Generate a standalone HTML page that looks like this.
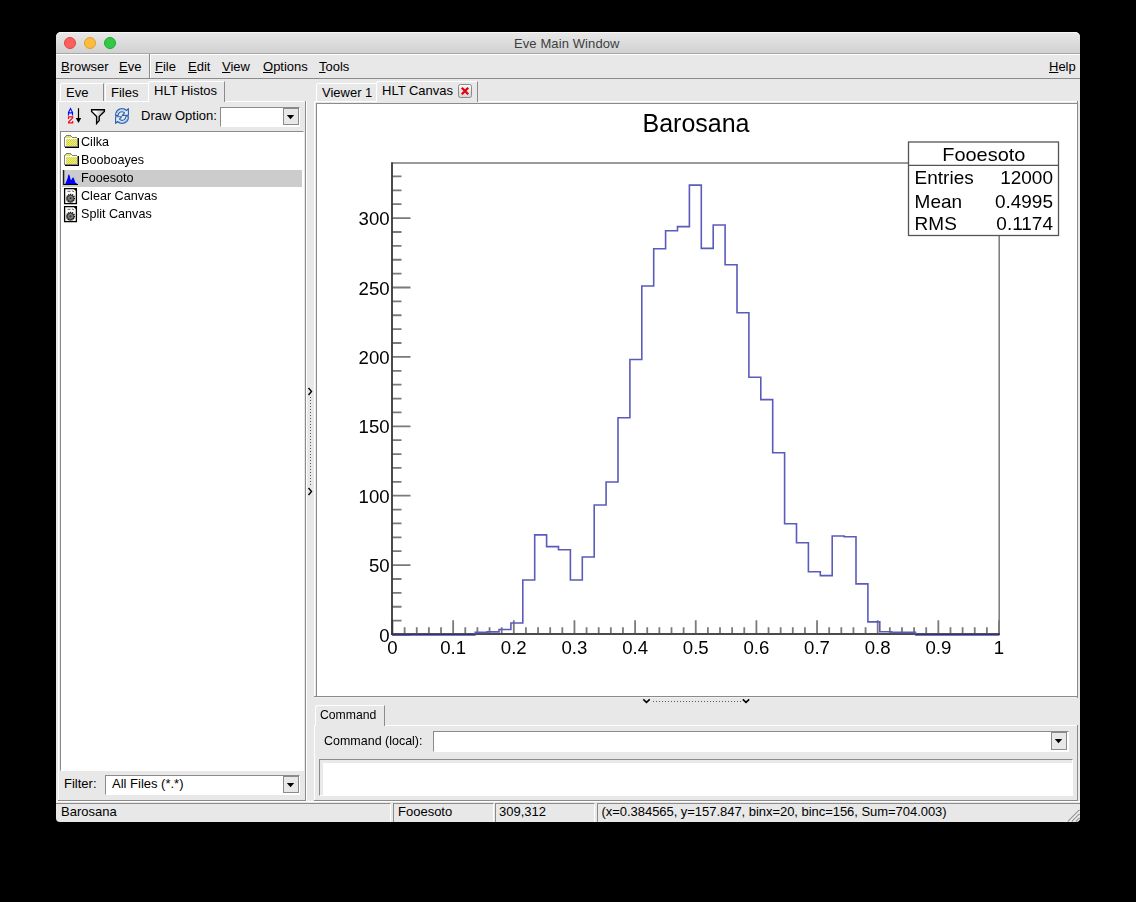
<!DOCTYPE html>
<html><head><meta charset="utf-8"><title>Eve Main Window</title>
<style>
html,body{margin:0;padding:0;background:#000;width:1136px;height:902px;overflow:hidden}
body{position:relative;font-family:"Liberation Sans",sans-serif;font-size:12.5px;color:#000}
.a{position:absolute;box-sizing:border-box}
.t{position:absolute;white-space:pre;line-height:12px;font-size:13px}
#win{left:56px;top:32px;width:1024px;height:790px;background:#e8e8e8;border-radius:5px 5px 4px 4px;overflow:hidden}
#title{left:56px;top:32px;width:1024px;height:22px;background:linear-gradient(#e7e7e7,#d1d1d1);border-top:1px solid #f6f6f6;border-bottom:1px solid #a8a8a8;border-radius:5px 5px 0 0}
.tl{position:absolute;top:37px;width:12px;height:12px;border-radius:50%;box-sizing:border-box}
.hl{background:#fff}
.sh{background:#8b8b8b}
.li{font-size:12.6px;will-change:transform}
.u{text-decoration:underline;text-underline-offset:1px}
</style></head><body>
<div class="a" id="win"></div>
<div class="a" id="title"></div>
<div class="tl" style="left:64px;background:#fc605c;border:1px solid #e0443e"></div>
<div class="tl" style="left:84px;background:#fdbc40;border:1px solid #dea123"></div>
<div class="tl" style="left:104px;background:#34c84a;border:1px solid #1aab29"></div>
<div class="t" style="left:514px;top:38px;font-size:13px;color:#3e3e3e;letter-spacing:0.1px">Eve Main Window</div>

<!-- menubars -->
<div class="a hl" style="left:56px;top:54px;width:1024px;height:1px"></div>
<div class="a sh" style="left:56px;top:78px;width:1024px;height:1px"></div>
<div class="a sh" style="left:149px;top:54px;width:1px;height:25px"></div>
<div class="a hl" style="left:150px;top:54px;width:1px;height:24px"></div>
<div class="t" style="left:61px;top:61px"><span class="u">B</span>rowser</div>
<div class="t" style="left:119px;top:61px"><span class="u">E</span>ve</div>
<div class="t" style="left:155px;top:61px"><span class="u">F</span>ile</div>
<div class="t" style="left:188px;top:61px"><span class="u">E</span>dit</div>
<div class="t" style="left:222px;top:61px"><span class="u">V</span>iew</div>
<div class="t" style="left:263px;top:61px"><span class="u">O</span>ptions</div>
<div class="t" style="left:319px;top:61px"><span class="u">T</span>ools</div>
<div class="t" style="left:1049px;top:61px"><span class="u">H</span>elp</div>

<!-- left tabs -->
<div class="a" style="left:60px;top:83px;width:44px;height:18px;border-left:1px solid #fff;border-top:1px solid #fff;border-right:1px solid #8b8b8b;border-radius:3px 0 0 0"></div>
<div class="t" style="left:66px;top:87px">Eve</div>
<div class="a" style="left:105px;top:83px;width:44px;height:18px;border-left:1px solid #fff;border-top:1px solid #fff;border-right:1px solid #fff;border-radius:3px 0 0 0"></div>
<div class="t" style="left:111px;top:87px">Files</div>
<div class="a" style="left:148px;top:81px;width:77px;height:21px;background:#e8e8e8;border-left:1px solid #fff;border-top:1px solid #fff;border-right:1px solid #8b8b8b;border-radius:3px 0 0 0"></div>
<div class="t" style="left:154px;top:85px">HLT Histos</div>

<!-- left panel frame -->
<div class="a hl" style="left:58px;top:101px;width:90px;height:1px"></div>
<div class="a hl" style="left:225px;top:101px;width:80px;height:1px"></div>
<div class="a hl" style="left:58px;top:101px;width:1px;height:699px"></div>
<div class="a sh" style="left:305px;top:101px;width:1px;height:700px"></div>
<div class="a sh" style="left:58px;top:800px;width:248px;height:1px"></div>

<!-- toolbar -->
<svg class="a" style="left:64px;top:105px" width="20" height="22" viewBox="0 0 20 22">
 <g fill="none" stroke-width="1.15" stroke-linecap="square">
  <path d="M4.5,10 V7.5 L5.5,5.5 L6.5,3.5 L7.5,5.5 L8.5,7.5 V10 M4.5,7.9 H8.5" stroke="#0010ff"/>
  <path d="M4.5,13.3 V11.9 H8.7 V12.8 L4.6,17 V17.8 H8.7 V16.5" stroke="#ff0010"/>
 </g>
 <path d="M14.5,3.2 V14" stroke="#000" stroke-width="1.2"/>
 <path d="M11.8,13 H17.2 L14.5,17.9 Z" fill="#000"/>
</svg>
<svg class="a" style="left:89px;top:107px" width="18" height="19" viewBox="0 0 18 19">
 <defs><linearGradient id="fg" x1="0" y1="0" x2="1" y2="0.3"><stop offset="0.3" stop-color="#fff"/><stop offset="1" stop-color="#a8a8a8"/></linearGradient></defs>
 <path d="M2.6,2.7 H15.4 V4.5 L10.2,9.5 V13.6 L7.6,16.5 V9.5 L2.6,4.5 Z" fill="url(#fg)" stroke="#000" stroke-width="1.35" stroke-linejoin="miter"/>
</svg>
<svg class="a" style="left:114px;top:107px" width="16" height="18" viewBox="0 0 16 18">
 <g fill="#e6eff9" stroke="#2e64ad" stroke-width="1.15" stroke-linejoin="round">
  <path d="M1.5,8.3 C1.5,4.5 4.3,1.6 8,1.6 C10,1.6 11.5,2.4 12.6,3.5 L14.4,1.6 V8.3 H8.2 L10.6,5.9 C9.9,5.2 9,4.7 8,4.7 C6,4.7 4.4,6.2 4.2,8.3 Z"/>
  <path d="M14.5,9.7 C14.5,13.5 11.7,16.4 8,16.4 C6,16.4 4.5,15.6 3.4,14.5 L1.6,16.4 V9.7 H7.8 L5.4,12.1 C6.1,12.8 7,13.3 8,13.3 C10,13.3 11.6,11.8 11.8,9.7 Z"/>
 </g>
 <path d="M3,6.5 C3.8,4.2 5.8,2.9 8,2.9 C9.5,2.9 10.8,3.4 11.8,4.5" stroke="#9ec0e6" stroke-width="0.9" fill="none"/>
 <path d="M13,11.5 C12.2,13.8 10.2,15.1 8,15.1 C6.5,15.1 5.2,14.6 4.2,13.5" stroke="#9ec0e6" stroke-width="0.9" fill="none"/>
</svg>
<div class="t" style="left:141px;top:110px">Draw Option:</div>
<div class="a" style="left:220px;top:107px;width:80px;height:20px;background:#fff;border-left:1px solid #8b8b8b;border-top:1px solid #8b8b8b;border-right:1px solid #fff;border-bottom:1px solid #fff"></div>
<div class="a" style="left:283px;top:108px;width:16px;height:17px;background:#e8e8e8;border:1px solid #8b8b8b"></div>
<svg class="a" style="left:286px;top:114px" width="9" height="6"><path d="M0.8,1 H8.2 L4.5,5.2 Z" fill="#000"/></svg>

<!-- list box -->
<div class="a" style="left:60px;top:131px;width:244px;height:640px;background:#fff;border-left:1px solid #8b8b8b;border-top:1px solid #8b8b8b;border-right:1px solid #fff;border-bottom:1px solid #fff"></div>
<div class="a" style="left:62px;top:170px;width:240px;height:17px;background:#cccccc"></div>
<!-- folder icons -->
<svg width="0" height="0" style="position:absolute"><defs><pattern id="dith" width="2" height="2" patternUnits="userSpaceOnUse"><rect width="2" height="2" fill="#ffff00"/><rect x="1" width="1" height="1" fill="#c4c4c4"/><rect y="1" width="1" height="1" fill="#c4c4c4"/></pattern></defs></svg>
<svg class="a" style="left:63px;top:134px" width="17" height="15" viewBox="0 0 17 15" shape-rendering="crispEdges">
 <rect x="2" y="2" width="6" height="2" fill="url(#dith)"/>
 <rect x="2" y="4" width="12" height="8" fill="url(#dith)"/>
 <rect x="2" y="4" width="12" height="1" fill="#fff"/>
 <rect x="2" y="4" width="1" height="8" fill="#fff"/>
 <path d="M1,3 H2 V2 H3 V1 H8 V2 H9 V3 H14 V4 H9 V3 H8 V2 H3 V3 H2 V12 H14 V4 H15 V13 H1 Z" fill="#808080"/>
 <rect x="2" y="13" width="14" height="1" fill="#000"/>
 <rect x="15" y="4" width="1" height="10" fill="#000"/>
</svg>
<svg class="a" style="left:63px;top:152px" width="17" height="15" viewBox="0 0 17 15" shape-rendering="crispEdges">
 <rect x="2" y="2" width="6" height="2" fill="url(#dith)"/>
 <rect x="2" y="4" width="12" height="8" fill="url(#dith)"/>
 <rect x="2" y="4" width="12" height="1" fill="#fff"/>
 <rect x="2" y="4" width="1" height="8" fill="#fff"/>
 <path d="M1,3 H2 V2 H3 V1 H8 V2 H9 V3 H14 V4 H9 V3 H8 V2 H3 V3 H2 V12 H14 V4 H15 V13 H1 Z" fill="#808080"/>
 <rect x="2" y="13" width="14" height="1" fill="#000"/>
 <rect x="15" y="4" width="1" height="10" fill="#000"/>
</svg>
<!-- histo icon -->
<svg class="a" style="left:63px;top:170px" width="17" height="16" viewBox="0 0 17 16">
 <path d="M0.7,0 V14.5 H15" stroke="#000" stroke-width="1.1" fill="none"/>
 <path d="M2.2,14 L4.5,8.5 L5.3,5 L6,4.3 L6.8,6 L7.5,9.5 L8.3,10 L9.5,7.8 L10.5,7.5 L11.3,9.5 L12.3,12.5 L14.5,14 Z" fill="#0000ff"/>
</svg>
<!-- macro icons -->
<svg class="a" style="left:63px;top:188px" width="15" height="17" viewBox="0 0 15 17">
 <rect x="1.6" y="0.6" width="11.8" height="15" fill="#fff" stroke="#000" stroke-width="1.3"/>
 <path d="M10.2,0.4 H13.6 V3.8 Z" fill="#000"/>
 <path d="M4.5,3.3 H7.5 M8.8,2.8 L11,3.8" stroke="#555" stroke-width="0.9"/>
 <circle cx="7.5" cy="10.3" r="3.9" fill="#858178" stroke="#111" stroke-width="1.4" stroke-dasharray="1.1 0.85"/>
 <circle cx="7.5" cy="10.3" r="3.1" fill="none" stroke="#222" stroke-width="0.7"/>
 <circle cx="7.5" cy="10.3" r="1.0" fill="#2a2a2a"/>
</svg>
<svg class="a" style="left:63px;top:206px" width="15" height="17" viewBox="0 0 15 17">
 <rect x="1.6" y="0.6" width="11.8" height="15" fill="#fff" stroke="#000" stroke-width="1.3"/>
 <path d="M10.2,0.4 H13.6 V3.8 Z" fill="#000"/>
 <path d="M4.5,3.3 H7.5 M8.8,2.8 L11,3.8" stroke="#555" stroke-width="0.9"/>
 <circle cx="7.5" cy="10.3" r="3.9" fill="#858178" stroke="#111" stroke-width="1.4" stroke-dasharray="1.1 0.85"/>
 <circle cx="7.5" cy="10.3" r="3.1" fill="none" stroke="#222" stroke-width="0.7"/>
 <circle cx="7.5" cy="10.3" r="1.0" fill="#2a2a2a"/>
</svg>
<div class="t li" style="left:81px;top:136px">Cilka</div>
<div class="t li" style="left:81px;top:154px">Booboayes</div>
<div class="t li" style="left:81px;top:172px">Fooesoto</div>
<div class="t li" style="left:81px;top:190px">Clear Canvas</div>
<div class="t li" style="left:81px;top:208px">Split Canvas</div>

<!-- filter -->
<div class="t" style="left:64px;top:778px">Filter:</div>
<div class="a" style="left:105px;top:775px;width:195px;height:20px;background:#fff;border-left:1px solid #8b8b8b;border-top:1px solid #8b8b8b;border-right:1px solid #fff;border-bottom:1px solid #fff"></div>
<div class="t" style="left:112px;top:778px">All Files (*.*)</div>
<div class="a" style="left:283px;top:776px;width:16px;height:17px;background:#e8e8e8;border:1px solid #8b8b8b"></div>
<svg class="a" style="left:286px;top:782px" width="9" height="6"><path d="M0.8,1 H8.2 L4.5,5.2 Z" fill="#000"/></svg>

<!-- vertical splitter -->
<div class="a hl" style="left:306px;top:101px;width:1px;height:700px"></div>
<svg class="a" style="left:306px;top:380px" width="10" height="120">
 <path d="M2.5,8 L5.5,11.5 L2.5,15" stroke="#000" stroke-width="1.4" fill="none"/>
 <path d="M2.5,108 L5.5,111.5 L2.5,115" stroke="#000" stroke-width="1.4" fill="none"/>
 <line x1="4.5" y1="17" x2="4.5" y2="106" stroke="#555" stroke-width="1" stroke-dasharray="1 2"/>
</svg>

<!-- right tabs -->
<div class="a" style="left:316px;top:83px;width:61px;height:18px;border-left:1px solid #fff;border-top:1px solid #fff;border-right:1px solid #fff;border-radius:3px 0 0 0"></div>
<div class="t" style="left:322px;top:87px">Viewer 1</div>
<div class="a" style="left:376px;top:81px;width:102px;height:21px;background:#e8e8e8;border-left:1px solid #fff;border-top:1px solid #fff;border-right:1px solid #8b8b8b;border-radius:3px 0 0 0"></div>
<div class="t" style="left:382px;top:85px">HLT Canvas</div>
<svg class="a" style="left:458px;top:84px" width="14" height="14" viewBox="0 0 14 14">
 <defs><linearGradient id="cg" x1="0" y1="0" x2="0" y2="1"><stop offset="0" stop-color="#fafafa"/><stop offset="1" stop-color="#d4d4d4"/></linearGradient></defs>
 <rect x="0.5" y="0.5" width="13" height="13" rx="2" fill="url(#cg)" stroke="#8a8a8a"/>
 <path d="M3.8,3.8 L10.2,10.2 M10.2,3.8 L3.8,10.2" stroke="#e3000f" stroke-width="2.3"/>
</svg>

<!-- right frame -->
<div class="a hl" style="left:314px;top:101px;width:62px;height:1px"></div>
<div class="a hl" style="left:478px;top:101px;width:600px;height:1px"></div>
<div class="a hl" style="left:314px;top:101px;width:1px;height:597px"></div>
<div class="a sh" style="left:1077px;top:101px;width:1px;height:597px"></div>
<!-- canvas -->
<div class="a" style="left:316px;top:103px;width:761px;height:594px;background:#fff;border-left:1px solid #8b8b8b;border-top:1px solid #8b8b8b;border-bottom:1px solid #8b8b8b"></div>

<!--PLOT-->
<svg class="a" style="left:317px;top:104px;will-change:transform" width="759" height="592" viewBox="317 104 759 592">
<path d="M392.50,163.0 H999.2 V634" stroke="#7a7a7a" stroke-width="1.5" fill="none"/>
<path d="M392.50,634.00 V620.30 M404.63,634.00 V627.20 M416.76,634.00 V627.20 M428.89,634.00 V627.20 M441.02,634.00 V627.20 M453.15,634.00 V620.30 M465.28,634.00 V627.20 M477.41,634.00 V627.20 M489.54,634.00 V627.20 M501.67,634.00 V627.20 M513.80,634.00 V620.30 M525.93,634.00 V627.20 M538.06,634.00 V627.20 M550.19,634.00 V627.20 M562.32,634.00 V627.20 M574.45,634.00 V620.30 M586.58,634.00 V627.20 M598.71,634.00 V627.20 M610.84,634.00 V627.20 M622.97,634.00 V627.20 M635.10,634.00 V620.30 M647.23,634.00 V627.20 M659.36,634.00 V627.20 M671.49,634.00 V627.20 M683.62,634.00 V627.20 M695.75,634.00 V620.30 M707.88,634.00 V627.20 M720.01,634.00 V627.20 M732.14,634.00 V627.20 M744.27,634.00 V627.20 M756.40,634.00 V620.30 M768.53,634.00 V627.20 M780.66,634.00 V627.20 M792.79,634.00 V627.20 M804.92,634.00 V627.20 M817.05,634.00 V620.30 M829.18,634.00 V627.20 M841.31,634.00 V627.20 M853.44,634.00 V627.20 M865.57,634.00 V627.20 M877.70,634.00 V620.30 M889.83,634.00 V627.20 M901.96,634.00 V627.20 M914.09,634.00 V627.20 M926.22,634.00 V627.20 M938.35,634.00 V620.30 M950.48,634.00 V627.20 M962.61,634.00 V627.20 M974.74,634.00 V627.20 M986.87,634.00 V627.20 M999.00,634.00 V620.30 M392.50,634.50 H410.50 M392.50,620.62 H401.50 M392.50,606.74 H401.50 M392.50,592.86 H401.50 M392.50,578.98 H401.50 M392.50,565.10 H410.50 M392.50,551.22 H401.50 M392.50,537.34 H401.50 M392.50,523.46 H401.50 M392.50,509.58 H401.50 M392.50,495.70 H410.50 M392.50,481.82 H401.50 M392.50,467.94 H401.50 M392.50,454.06 H401.50 M392.50,440.18 H401.50 M392.50,426.30 H410.50 M392.50,412.42 H401.50 M392.50,398.54 H401.50 M392.50,384.66 H401.50 M392.50,370.78 H401.50 M392.50,356.90 H410.50 M392.50,343.02 H401.50 M392.50,329.14 H401.50 M392.50,315.26 H401.50 M392.50,301.38 H401.50 M392.50,287.50 H410.50 M392.50,273.62 H401.50 M392.50,259.74 H401.50 M392.50,245.86 H401.50 M392.50,231.98 H401.50 M392.50,218.10 H410.50 M392.50,204.22 H401.50 M392.50,190.34 H401.50 M392.50,176.46 H401.50" stroke="#7a7a7a" stroke-width="1.8" fill="none"/>
<path d="M391.50,634.00 H999.9" stroke="#4a4a4a" stroke-width="1.8" fill="none"/>
<path d="M392.00,634.90 V162.2" stroke="#2a2a2a" stroke-width="1.7" fill="none"/>
<path fill="none" stroke="#5a5bbb" stroke-width="1.6" d="M392.5,634.5 V634.5 H403.8 V634.5 H415.7 V634.5 H427.6 V634.5 H439.5 V634.5 H451.4 V634.5 H463.3 V634.5 H475.2 V632.4 H487.1 V631.9 H499.0 V629.5 H510.9 V623.0 H522.8 V580.0 H534.7 V534.9 H546.6 V546.6 H558.5 V549.7 H570.4 V580.0 H582.3 V557.0 H594.2 V505.0 H606.1 V482.0 H618.0 V417.7 H629.9 V359.5 H641.8 V286.0 H653.7 V248.8 H665.6 V230.7 H677.5 V226.6 H689.4 V185.1 H701.3 V248.4 H713.2 V225.0 H725.1 V264.8 H737.0 V312.7 H748.9 V377.3 H760.8 V399.6 H772.7 V452.7 H784.6 V523.7 H796.5 V542.7 H808.4 V571.7 H820.3 V575.6 H832.2 V536.0 H844.1 V536.8 H856.0 V583.9 H867.9 V621.9 H879.8 V631.8 H891.7 V632.4 H903.6 V632.4 H915.5 V634.5 H927.4 V634.5 H939.3 V634.5 H951.2 V634.5 H963.1 V634.5 H975.0 V634.5 H986.9 V634.5 H998.5"/>
<path d="M392,634.9 H475.5 M915.2,634.9 H999.5" stroke="#23236a" stroke-width="1.2" fill="none"/>
<g font-family="Liberation Sans" font-size="18.6" text-anchor="middle" fill="#000"><text x="392.50" y="654.2">0</text><text x="453.15" y="654.2">0.1</text><text x="513.80" y="654.2">0.2</text><text x="574.45" y="654.2">0.3</text><text x="635.10" y="654.2">0.4</text><text x="695.75" y="654.2">0.5</text><text x="756.40" y="654.2">0.6</text><text x="817.05" y="654.2">0.7</text><text x="877.70" y="654.2">0.8</text><text x="938.35" y="654.2">0.9</text><text x="999.00" y="654.2">1</text></g>
<g font-family="Liberation Sans" font-size="18.6" text-anchor="end" fill="#000"><text x="389.6" y="641.50">0</text><text x="389.6" y="572.13">50</text><text x="389.6" y="502.77">100</text><text x="389.6" y="433.40">150</text><text x="389.6" y="364.04">200</text><text x="389.6" y="294.68">250</text><text x="389.6" y="225.31">300</text></g>
<text x="696" y="132" font-family="Liberation Sans" font-size="25" text-anchor="middle">Barosana</text>
<rect x="908.5" y="142" width="150" height="93.5" fill="#fff" stroke="#555" stroke-width="1.3"/>
<path d="M908.5,165.3 H1058.5" stroke="#555" stroke-width="1.3"/>
<g font-family="Liberation Sans"><text transform="translate(983.80,160.70) scale(1.060,1)" text-anchor="middle" font-size="18.8">Fooesoto</text><text transform="translate(914.60,183.60) scale(1.055,1)" text-anchor="start" font-size="18">Entries</text><text transform="translate(1053.00,183.60) scale(1.055,1)" text-anchor="end" font-size="18">12000</text><text transform="translate(914.60,207.60) scale(1.055,1)" text-anchor="start" font-size="18">Mean</text><text transform="translate(1053.00,207.60) scale(1.055,1)" text-anchor="end" font-size="18">0.4995</text><text transform="translate(914.60,230.30) scale(1.055,1)" text-anchor="start" font-size="18">RMS</text><text transform="translate(1053.00,230.30) scale(1.055,1)" text-anchor="end" font-size="18">0.1174</text></g>
</svg>
<!--/PLOT-->

<!-- horizontal splitter -->
<div class="a sh" style="left:314px;top:696px;width:764px;height:1px"></div>
<div class="a" style="left:314px;top:697px;width:763px;height:1px;background:#f0f0f0"></div>
<svg class="a" style="left:630px;top:694px" width="130" height="12">
 <path d="M13.3,5.4 L16.5,8.4 L19.7,5.4" stroke="#000" stroke-width="1.5" fill="none"/>
 <path d="M112.8,5.4 L116,8.4 L119.2,5.4" stroke="#000" stroke-width="1.5" fill="none"/>
 <line x1="23" y1="7.5" x2="111" y2="7.5" stroke="#555" stroke-width="1" stroke-dasharray="1 2"/>
</svg>

<!-- command tab -->
<div class="a" style="left:315px;top:705px;width:70px;height:21px;background:#e8e8e8;border-left:1px solid #fff;border-top:1px solid #fff;border-right:1px solid #8b8b8b;border-radius:3px 0 0 0"></div>
<div class="t" style="left:320px;top:709px;transform:scaleX(0.94);transform-origin:0 0">Command</div>
<div class="a hl" style="left:385px;top:725px;width:693px;height:1px"></div>
<div class="a hl" style="left:314px;top:725px;width:1px;height:76px"></div>
<div class="a sh" style="left:1077px;top:725px;width:1px;height:76px"></div>
<div class="a sh" style="left:314px;top:800px;width:764px;height:1px"></div>
<div class="a hl" style="left:56px;top:801px;width:1024px;height:1px"></div>
<div class="t" style="left:324px;top:735px;transform:scaleX(0.96);transform-origin:0 0">Command (local):</div>
<div class="a" style="left:433px;top:731px;width:636px;height:21px;background:#fff;border-left:1px solid #8b8b8b;border-top:1px solid #8b8b8b;border-right:1px solid #fff;border-bottom:1px solid #fff"></div>
<div class="a" style="left:1051px;top:732px;width:16px;height:18px;background:#e8e8e8;border:1px solid #8b8b8b"></div>
<svg class="a" style="left:1054px;top:738px" width="9" height="6"><path d="M0.8,1 H8.2 L4.5,5.2 Z" fill="#000"/></svg>
<div class="a" style="left:319px;top:759px;width:754px;height:37px;background:#fff;border-left:1px solid #8b8b8b;border-top:1px solid #8b8b8b;border-right:1px solid #fff;border-bottom:1px solid #fff;box-shadow:inset 3px 3px 0 0 #e9e9e9"></div>

<!-- status bar -->
<div class="a" style="left:56px;top:803px;width:335px;height:19px;border-top:1px solid #8b8b8b;border-right:1px solid #fff"></div>
<div class="a" style="left:393px;top:803px;width:101px;height:19px;border-top:1px solid #8b8b8b;border-left:1px solid #8b8b8b;border-right:1px solid #fff"></div>
<div class="a" style="left:495px;top:803px;width:100px;height:19px;border-top:1px solid #8b8b8b;border-left:1px solid #8b8b8b;border-right:1px solid #fff"></div>
<div class="a" style="left:597px;top:803px;width:483px;height:19px;border-top:1px solid #8b8b8b;border-left:1px solid #8b8b8b"></div>
<div class="t" style="left:61px;top:806px">Barosana</div>
<div class="t" style="left:398px;top:806px">Fooesoto</div>
<div class="t" style="left:499px;top:806px">309,312</div>
<div class="t" style="left:601.5px;top:806px;letter-spacing:-0.04px">(x=0.384565, y=157.847, binx=20, binc=156, Sum=704.003)</div>
<svg class="a" style="left:1066px;top:808px" width="14" height="14">
 <path d="M2,13.5 L13.5,2 M6,13.5 L13.5,6 M10,13.5 L13.5,10" stroke="#8b8b8b" stroke-width="1.2"/>
 <path d="M3,13.5 L13.5,3 M7,13.5 L13.5,7 M11,13.5 L13.5,11" stroke="#fff" stroke-width="0.8"/>
</svg>

</body></html>
